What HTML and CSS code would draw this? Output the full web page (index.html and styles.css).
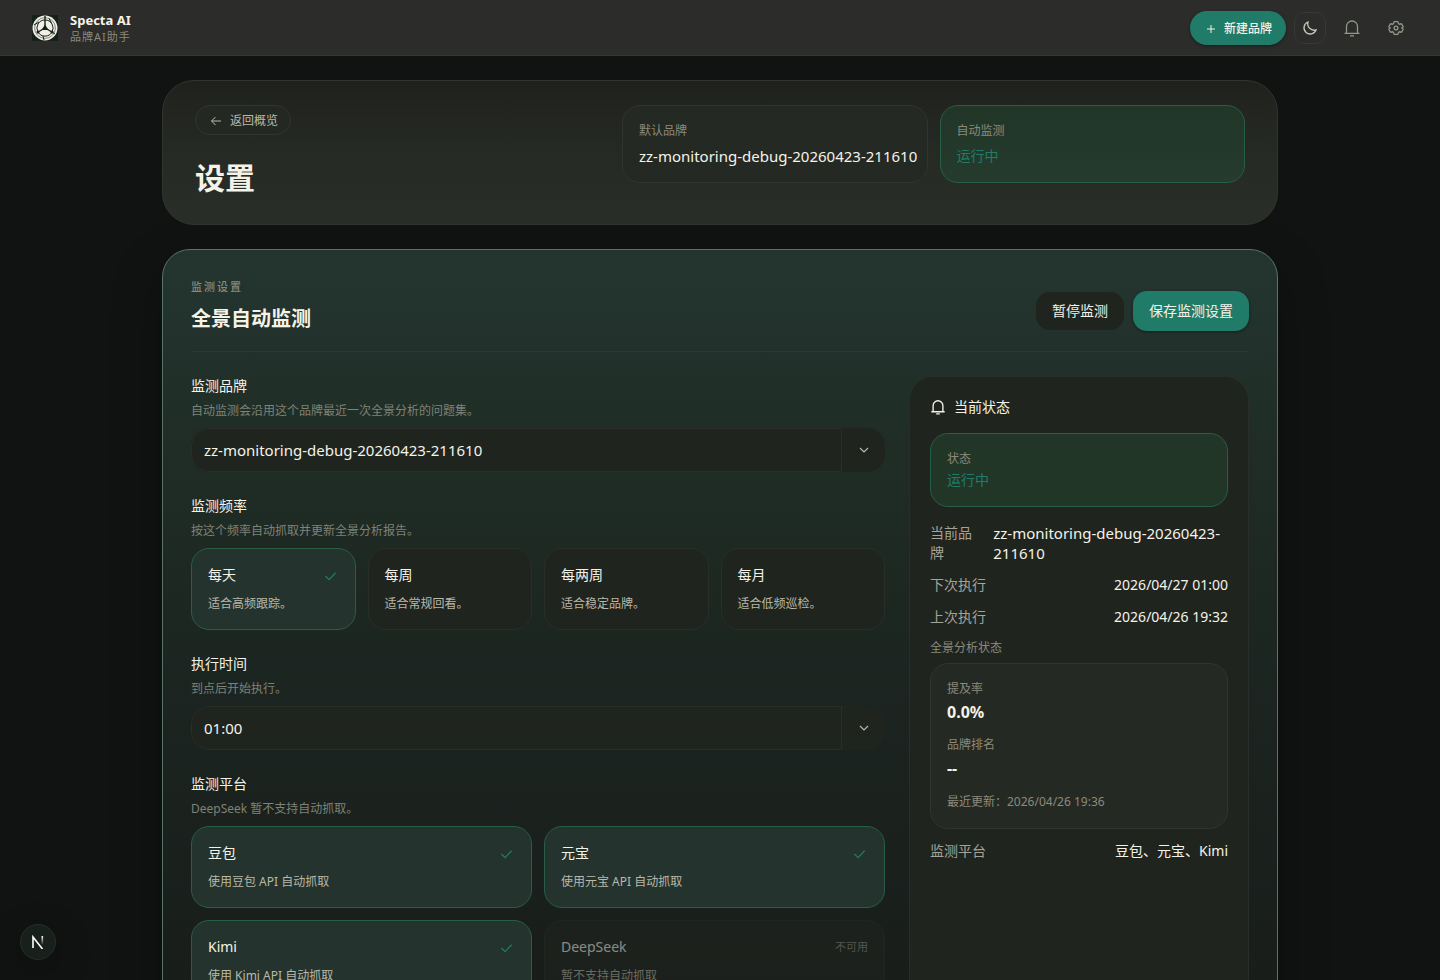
FILE: index.html
```html
<!DOCTYPE html>
<html lang="zh-CN">
<head>
    <meta charset="UTF-8">
    <meta name="viewport" content="width=device-width, initial-scale=1.0">
    <title>设置 - Specta AI</title>
    <link rel="stylesheet" href="styles.css">
</head>
<body>
    <svg class="sprite" aria-hidden="true">
        <symbol id="icon-bell" viewBox="0 0 18 18">
            <path d="M3.5 14V7.500a5.500 5.500 0 0 1 11 0V14M1.500 14.300h15M7 16.800h4"/>
        </symbol>
        <symbol id="icon-check" viewBox="0 0 14 14">
            <path d="M1.5 7.5l4 4 7-7.5"/>
        </symbol>
        <symbol id="icon-down" viewBox="0 0 10 10">
            <path d="M1 3l4 4 4-4"/>
        </symbol>
    </svg>

    <header class="topbar">
        <a class="logo" href="#">
            <svg class="logo-mark" viewBox="0 0 26 26" aria-hidden="true">
                <rect width="26" height="26" fill="#15201b"/>
                <circle cx="13" cy="13" r="12.5" fill="#f1f0e4"/>
                <g fill="none" stroke="#15201b" stroke-width="1">
                    <circle cx="13" cy="13" r="10.4" stroke-width=".5"/>
                    <path d="M13 1v12M13 13l-7 4M13 13l7 4" stroke-width="1.4"/>
                    <path d="M13 5a8 8 0 0 0-7 12M13 5a8 8 0 0 1 7 12M6 17a8 8 0 0 0 14 0"/>
                    <path d="M7 7L2 10M11 21l1 4M20 17l3 2M19.500 8L17 3.500"/>
                </g>
                <path d="M13 9.500l3.500 5.500h-7z" fill="#15201b"/>
                <circle cx="6" cy="17" r="1.500" fill="#15201b"/>
                <circle cx="20" cy="17" r="1.500" fill="#15201b"/>
            </svg>
            <span class="logo-text">
                <strong>Specta AI</strong>
                <small>品牌AI助手</small>
            </span>
        </a>
        <nav class="actions">
            <button class="btn-new" type="button">
                <svg viewBox="0 0 10 10" aria-hidden="true"><path d="M5 1v8M1 5h8"/></svg>
                新建品牌
            </button>
            <button class="btn-theme" type="button" aria-label="切换主题">
                <svg viewBox="0 0 16 16" aria-hidden="true"><path d="M6 2A6.200 6.200 0 1 0 14 10 6.500 6.500 0 0 1 6 2z"/></svg>
            </button>
            <button class="btn-icon" type="button" aria-label="通知">
                <svg class="bell" aria-hidden="true"><use href="#icon-bell"/></svg>
            </button>
            <button class="btn-icon" type="button" aria-label="设置">
                <svg viewBox="0 0 16 16" aria-hidden="true">
                    <path d="M6.200 1.600h3.600l.7 2 1 .6 2-.4 1.700 3-1.400 1.200 1.400 1.200-1.700 3-2-.4-1 .6-.7 2H6.200l-.7-2-1-.6-2 .4-1.700-3L2.200 8 .8 6.800l1.700-3 2 .4 1-.6z"/>
                    <circle cx="8" cy="8" r="1.900"/>
                </svg>
            </button>
        </nav>
    </header>

    <main class="page">
        <section class="hero">
            <div class="hero-left">
                <a class="back" href="#">
                    <svg viewBox="0 0 12 12" aria-hidden="true"><path d="M11 6H1.500M5.500 2l-4 4 4 4"/></svg>
                    返回概览
                </a>
                <h1>设置</h1>
            </div>
            <div class="hero-stats">
                <div class="stat">
                    <span class="muted">默认品牌</span>
                    <b class="brand-name">zz-monitoring-debug-20260423-211610</b>
                </div>
                <div class="stat running">
                    <span class="muted">自动监测</span>
                    <b>运行中</b>
                </div>
            </div>
        </section>

        <form class="panel">
            <div class="panel-head">
                <div>
                    <p class="eyebrow">监测设置</p>
                    <h2>全景自动监测</h2>
                </div>
                <div class="panel-btns">
                    <button class="btn-pause" type="button">暂停监测</button>
                    <button class="btn-save" type="button">保存监测设置</button>
                </div>
            </div>

            <div class="panel-body">
                <div class="fields">
                    <div class="field">
                        <label class="field-title" for="brand">监测品牌</label>
                        <p class="hint">自动监测会沿用这个品牌最近一次全景分析的问题集。</p>
                        <div class="select">
                            <select id="brand"><option>zz-monitoring-debug-20260423-211610</option></select>
                            <span class="arrow"><svg aria-hidden="true"><use href="#icon-down"/></svg></span>
                        </div>
                    </div>

                    <fieldset class="field">
                        <legend class="field-title">监测频率</legend>
                        <p class="hint">按这个频率自动抓取并更新全景分析报告。</p>
                        <div class="cards four">
                            <label class="card">
                                <input type="radio" name="freq" checked>
                                <span class="card-top">每天 <svg class="check" aria-hidden="true"><use href="#icon-check"/></svg></span>
                                <span class="card-desc">适合高频跟踪。</span>
                            </label>
                            <label class="card">
                                <input type="radio" name="freq">
                                <span class="card-top">每周 <svg class="check" aria-hidden="true"><use href="#icon-check"/></svg></span>
                                <span class="card-desc">适合常规回看。</span>
                            </label>
                            <label class="card">
                                <input type="radio" name="freq">
                                <span class="card-top">每两周 <svg class="check" aria-hidden="true"><use href="#icon-check"/></svg></span>
                                <span class="card-desc">适合稳定品牌。</span>
                            </label>
                            <label class="card">
                                <input type="radio" name="freq">
                                <span class="card-top">每月 <svg class="check" aria-hidden="true"><use href="#icon-check"/></svg></span>
                                <span class="card-desc">适合低频巡检。</span>
                            </label>
                        </div>
                    </fieldset>

                    <div class="field">
                        <label class="field-title" for="time">执行时间</label>
                        <p class="hint">到点后开始执行。</p>
                        <div class="select">
                            <select id="time"><option>01:00</option></select>
                            <span class="arrow"><svg aria-hidden="true"><use href="#icon-down"/></svg></span>
                        </div>
                    </div>

                    <fieldset class="field">
                        <legend class="field-title">监测平台</legend>
                        <p class="hint">DeepSeek 暂不支持自动抓取。</p>
                        <div class="cards two">
                            <label class="card">
                                <input type="checkbox" name="platform" checked>
                                <span class="card-top">豆包 <svg class="check" aria-hidden="true"><use href="#icon-check"/></svg></span>
                                <span class="card-desc">使用豆包 API 自动抓取</span>
                            </label>
                            <label class="card">
                                <input type="checkbox" name="platform" checked>
                                <span class="card-top">元宝 <svg class="check" aria-hidden="true"><use href="#icon-check"/></svg></span>
                                <span class="card-desc">使用元宝 API 自动抓取</span>
                            </label>
                            <label class="card">
                                <input type="checkbox" name="platform" checked>
                                <span class="card-top">Kimi <svg class="check" aria-hidden="true"><use href="#icon-check"/></svg></span>
                                <span class="card-desc">使用 Kimi API 自动抓取</span>
                            </label>
                            <label class="card disabled">
                                <input type="checkbox" name="platform" disabled>
                                <span class="card-top">DeepSeek <small>不可用</small></span>
                                <span class="card-desc">暂不支持自动抓取</span>
                            </label>
                        </div>
                    </fieldset>
                </div>

                <aside class="status">
                    <h3><svg class="bell" aria-hidden="true"><use href="#icon-bell"/></svg>当前状态</h3>
                    <div class="box running">
                        <span class="muted">状态</span>
                        <b>运行中</b>
                    </div>
                    <dl>
                        <div class="row"><dt>当前品牌</dt><dd class="brand-name">zz-monitoring-debug-20260423-211610</dd></div>
                        <div class="row"><dt>下次执行</dt><dd>2026/04/27 01:00</dd></div>
                        <div class="row"><dt>上次执行</dt><dd>2026/04/26 19:32</dd></div>
                    </dl>
                    <p class="muted box-title">全景分析状态</p>
                    <div class="box metrics">
                        <span class="muted">提及率</span>
                        <strong>0.0%</strong>
                        <span class="muted">品牌排名</span>
                        <strong>--</strong>
                        <span class="updated">最近更新：2026/04/26 19:36</span>
                    </div>
                    <dl>
                        <div class="row"><dt>监测平台</dt><dd>豆包、元宝、Kimi</dd></div>
                    </dl>
                </aside>
            </div>
        </form>
    </main>

    <button class="dev-badge" type="button" aria-label="开发工具">
        <svg viewBox="0 0 14 14" aria-hidden="true">
            <defs>
                <linearGradient id="fade" x1="0" y1="0" x2="0" y2="1">
                    <stop offset="0" stop-color="#fff"/>
                    <stop offset="1" stop-color="#fff" stop-opacity="0"/>
                </linearGradient>
            </defs>
            <path d="M2 13V2l9.500 12" fill="none" stroke="#fff" stroke-width="1.600"/>
            <rect x="10.500" y="1" width="1.600" height="9" fill="url(#fade)"/>
        </svg>
    </button>
</body>
</html>
```

FILE: styles.css
```css
* {
    box-sizing: border-box;
}
body {
    margin: 0;
    min-height: 100vh;
    background-color: #111312;
    color: #f5f3e8;
    font-family: "Noto Sans", "Noto Sans CJK SC", sans-serif;
    font-size: 14px;
    line-height: 20px;
}
h1, h2, h3, p, dl, dd, fieldset {
    margin: 0;
    padding: 0;
    border: 0;
}
button, select {
    font: inherit;
    color: inherit;
    cursor: pointer;
}
a {
    color: inherit;
    text-decoration: none;
}
svg {
    fill: none;
    stroke: currentColor;
    flex: none;
}
.sprite {
    display: none;
}
.muted {
    font-size: 12px;
    line-height: 18px;
    color: #8b8a7c;
}

/* top bar */
.topbar {
    display: flex;
    align-items: center;
    justify-content: space-between;
    height: 56px;
    padding: 0 26px 0 32px;
    background-color: #2c2c2a;
    border-bottom: 1px solid #353936;
}
.logo {
    display: flex;
    align-items: center;
    gap: 12px;
}
.logo-mark {
    width: 26px;
    height: 26px;
    stroke: none;
}
.logo-text {
    display: flex;
    flex-direction: column;
}
.logo-text strong {
    font-size: 13px;
    line-height: 18px;
}
.logo-text small {
    font-size: 11px;
    line-height: 16px;
    letter-spacing: 1px;
    color: #8b8a7c;
}
.actions {
    display: flex;
    align-items: center;
    gap: 8px;
}
.btn-new {
    display: flex;
    align-items: center;
    gap: 8px;
    height: 34px;
    padding: 2px 14px 0 16px;
    border: 0;
    border-radius: 17px;
    background-color: #217b69;
    font-size: 12px;
    font-weight: 500;
    box-shadow: 0 1px 3px rgba(0, 0, 0, 0.4);
}
.btn-new svg {
    width: 10px;
    height: 10px;
}
.btn-theme, .btn-icon {
    display: flex;
    align-items: center;
    justify-content: center;
    width: 32px;
    height: 32px;
    padding: 0;
    border: 1px solid #353a36;
    border-radius: 10px;
    background: none;
    color: #c9c7b8;
}
.btn-icon {
    width: 36px;
    border: 0;
    color: #8f998a;
}
.btn-theme svg, .btn-icon svg {
    width: 16px;
    height: 16px;
    stroke-width: 1.3;
}
.btn-icon .bell {
    width: 18px;
    height: 18px;
}

/* page head */
.page {
    max-width: 1180px;
    margin: 0 auto;
    padding: 24px 32px;
}
.hero {
    display: flex;
    justify-content: space-between;
    align-items: flex-start;
    padding: 24px 32px;
    border: 1px solid #30352f;
    border-radius: 32px;
    background: linear-gradient(180deg, #20211d, #252a25 50%, #2b2e28);
}
.back {
    display: inline-flex;
    align-items: center;
    gap: 8px;
    height: 30px;
    padding: 1px 12px 0 14px;
    border: 1px solid #30352f;
    border-radius: 15px;
    background-color: #242823;
    color: #bab8a9;
    font-size: 12px;
}
.back svg {
    width: 12px;
    height: 12px;
}
h1 {
    margin-top: 20px;
    font-size: 30px;
    line-height: 45px;
    font-weight: 700;
}
.hero-stats {
    display: grid;
    grid-template-columns: 1fr 1fr;
    gap: 12px;
    flex: 0 1 623px;
}
.stat {
    display: flex;
    flex-direction: column;
    gap: 6px;
    min-width: 0;
    padding: 16px;
    border: 1px solid #30352f;
    border-radius: 18px;
    background-color: #252924;
}
.stat b {
    font-weight: 400;
    white-space: nowrap;
}
.brand-name {
    font-size: 15px;
}
.running {
    border-color: #265f46;
    background: linear-gradient(180deg, #213627, #253b2d);
}
.running b {
    color: #217b69;
    font-weight: 400;
}

/* monitor panel */
.panel {
    margin-top: 24px;
    padding: 28px;
    border: 1px solid #587468;
    border-radius: 28px;
    background: linear-gradient(180deg, #24352f 0, #1f2b25 240px, #1b2420 460px, #191d1a 740px);
    box-shadow: 0 18px 50px rgba(0, 0, 0, 0.3);
}
.panel-head {
    display: flex;
    justify-content: space-between;
    align-items: flex-end;
    padding-bottom: 20px;
    border-bottom: 1px solid #2c3833;
}
.eyebrow {
    font-size: 11px;
    line-height: 17px;
    font-weight: 500;
    letter-spacing: 2px;
    color: #8b8a7c;
}
h2 {
    margin-top: 12px;
    font-size: 20px;
    line-height: 24px;
    font-weight: 700;
}
.panel-btns {
    display: flex;
    align-items: center;
    gap: 9px;
}
.panel-btns button {
    height: 40px;
    padding: 0 16px;
    border: 0;
    border-radius: 14px;
}
.panel-btns .btn-pause {
    height: 38px;
    background-color: #20241f;
}
.panel-btns .btn-save {
    background-color: #217b69;
    box-shadow: 0 1px 3px rgba(0, 0, 0, 0.4);
}
.panel-body {
    display: grid;
    grid-template-columns: minmax(0, 1fr) 340px;
    gap: 24px;
    padding-top: 24px;
}
.fields {
    display: flex;
    flex-direction: column;
    gap: 24px;
}
.field {
    min-width: 0;
}
.field-title {
    display: block;
    padding: 0;
}
.hint {
    margin: 5px 0 7px;
    font-size: 12px;
    color: #7f8275;
}
.select {
    display: flex;
    height: 44px;
    border-radius: 18px;
    overflow: hidden;
    background-color: #20241f;
}
.select select {
    flex: 1;
    min-width: 0;
    padding: 0 12px;
    border: 1px solid #2a2e28;
    border-radius: 18px 0 0 18px;
    background: none;
    font-size: 15px;
    appearance: none;
}
.arrow {
    display: flex;
    align-items: center;
    justify-content: center;
    width: 43px;
    color: #bab8a9;
}
.arrow svg {
    width: 10px;
    height: 10px;
    stroke-width: 1.2;
}
.cards {
    display: grid;
    gap: 12px;
}
.four {
    grid-template-columns: repeat(4, 1fr);
}
.two {
    grid-template-columns: repeat(2, 1fr);
}
.card {
    display: flex;
    flex-direction: column;
    gap: 9px;
    padding: 16px 16px 15px;
    border: 1px solid #2a2e28;
    border-radius: 18px;
    background-color: #20241f;
    cursor: pointer;
}
.card input {
    position: absolute;
    opacity: 0;
}
.card:has(input:checked) {
    border-color: #265f46;
    background-color: #24332d;
}
.card-top {
    display: flex;
    align-items: center;
    justify-content: space-between;
}
.card-top small {
    font-size: 11px;
    color: #8b8a7c;
}
.card-desc {
    font-size: 12px;
    color: #bab8a9;
}
.check {
    display: none;
    width: 13px;
    height: 13px;
    margin-right: 2px;
    color: #217b69;
    stroke-width: 1.3;
}
input:checked + .card-top .check {
    display: block;
}
.disabled {
    opacity: 0.5;
    cursor: not-allowed;
}

/* status column */
.status {
    padding: 20px;
    border: 1px solid #2a2e28;
    border-radius: 24px;
    background-color: #20241f;
}
.status h3 {
    display: flex;
    align-items: center;
    gap: 8px;
    font-size: 14px;
    font-weight: 400;
}
.status .bell {
    width: 16px;
    height: 16px;
    stroke-width: 1.5;
}
.box {
    display: flex;
    flex-direction: column;
    gap: 2px;
    padding: 16px;
    border: 1px solid #30352f;
    border-radius: 18px;
    background-color: #252924;
}
.box.running {
    margin: 16px 0;
    border-color: #265f46;
    background: #213627;
}
.row {
    display: flex;
    justify-content: space-between;
    gap: 16px;
    margin-bottom: 12px;
}
.row dt {
    color: #a5a395;
}
.box-title {
    margin-bottom: 6px;
}
.metrics {
    margin-bottom: 12px;
}
.metrics strong {
    margin-bottom: 10px;
    font-size: 16px;
    line-height: 24px;
}
.updated {
    font-size: 12px;
    color: #8b8a7c;
}

.dev-badge {
    position: fixed;
    left: 20px;
    bottom: 20px;
    display: flex;
    align-items: center;
    justify-content: center;
    width: 36px;
    height: 36px;
    border: 1px solid #2a2e28;
    border-radius: 50%;
    background-color: #18201c;
    box-shadow: 0 12px 36px rgba(0, 0, 0, 0.3);
}
.dev-badge svg {
    width: 14px;
    height: 14px;
    stroke: none;
}
```
